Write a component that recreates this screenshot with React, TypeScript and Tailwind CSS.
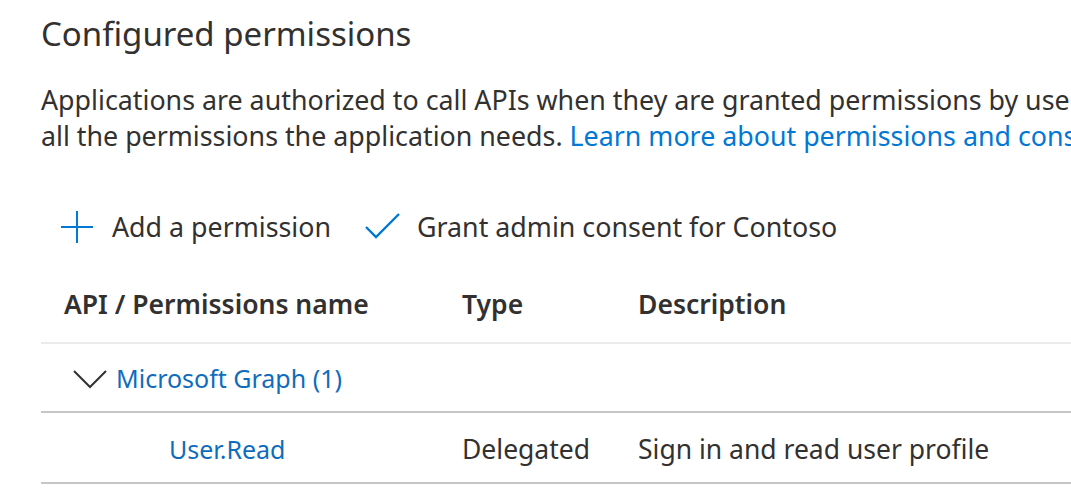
import React from "react";

const FONT = { fontFamily: '"Noto Sans", "Open Sans", sans-serif' };

function PlusIcon() {
  return (
    <svg width="34" height="34" viewBox="0 0 34 34" className="shrink-0">
      <path d="M17 1 V33 M1 17 H33" stroke="#0078d4" strokeWidth="2" fill="none" />
    </svg>
  );
}

function CheckIcon() {
  return (
    <svg width="36" height="28" viewBox="0 0 36 28" className="shrink-0">
      <path d="M1 14 L11 24 L34 1" stroke="#0078d4" strokeWidth="2.4" fill="none" />
    </svg>
  );
}

function ChevronDown() {
  return (
    <svg width="34" height="20" viewBox="0 0 34 20" className="shrink-0">
      <path d="M1 2 L17 18 L33 2" stroke="#323130" strokeWidth="2" fill="none" />
    </svg>
  );
}

export default function App() {
  return (
    <div className="h-[499px] w-[1071px] overflow-hidden bg-white text-[#323130]" style={FONT}>
      <div className="pl-[41px]">
        <h1 className="pt-[13px] text-[33px] leading-[42px]">Configured permissions</h1>

        <p className="mt-[27px] text-[26.8px] leading-[36px]">
          <span className="block whitespace-nowrap">
            Applications are authorized to call APIs when they are granted permissions by users/admins as part of the consent process.
          </span>
          <span className="block whitespace-nowrap">
            all the permissions the application needs.{" "}
            <a className="text-[#0078d4]">Learn more about permissions and consent</a>
          </span>
        </p>

        <div className="mt-[53px] flex h-[40px] items-center pl-[19px] text-[26.8px]">
          <button className="flex items-center gap-[18px]">
            <PlusIcon />
            <span>Add a permission</span>
          </button>
          <button className="ml-[34px] flex items-center gap-[16px]">
            <CheckIcon />
            <span>Grant admin consent for Contoso</span>
          </button>
        </div>

        <table className="mt-[20px] w-[1100px] border-collapse text-left text-[26.5px]">
          <thead>
            <tr className="h-[76px] border-b-2 border-[#edebe9]">
              <th className="w-[421px] pl-[23px] font-semibold">API / Permissions name</th>
              <th className="w-[176px] font-semibold">Type</th>
              <th className="font-semibold">Description</th>
            </tr>
          </thead>
          <tbody>
            <tr className="h-[69px] border-b-2 border-[#c8c6c4]">
              <td colSpan={3} className="pl-[32px] pt-[3px]">
                <span className="flex items-center gap-[9px]">
                  <ChevronDown />
                  <a className="text-[25px] text-[#0f6cbd]">Microsoft Graph (1)</a>
                </span>
              </td>
            </tr>
            <tr className="h-[71px] border-b-2 border-[#c8c6c4]">
              <td className="pl-[128px] pt-[4px]">
                <a className="text-[25px] text-[#0f6cbd]">User.Read</a>
              </td>
              <td className="pt-[4px]">Delegated</td>
              <td className="pt-[4px]">Sign in and read user profile</td>
            </tr>
          </tbody>
        </table>
      </div>
    </div>
  );
}
